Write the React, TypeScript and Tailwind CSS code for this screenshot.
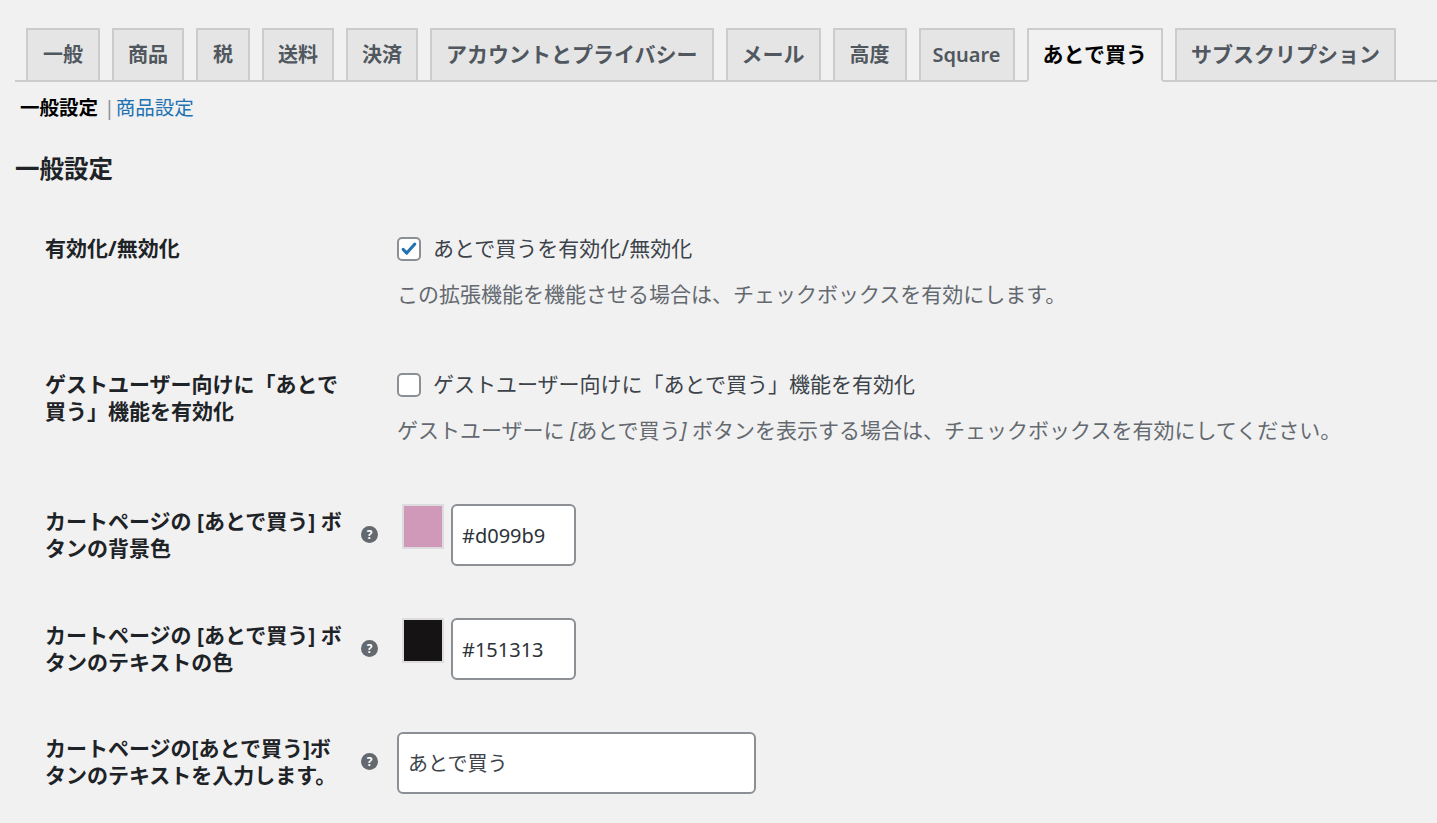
import React from "react";

const tabs = [
  { label: "一般", size: "text-[20px] px-[15px]" },
  { label: "商品", size: "text-[20px] px-[14px]" },
  { label: "税", size: "text-[20px] px-[15px]" },
  { label: "送料", size: "text-[20px] px-[14px]" },
  { label: "決済", size: "text-[20px] px-[14px]" },
  { label: "アカウントとプライバシー", size: "text-[21px] px-[14px]" },
  { label: "メール", size: "text-[21px] px-[14px]" },
  { label: "高度", size: "text-[20px] px-[15px]" },
  { label: "Square", size: "text-[20px] px-[12px]" },
  { label: "あとで買う", size: "text-[21px] px-[14px]" },
  { label: "サブスクリプション", size: "text-[21px] px-[14px]" },
];

const HelpTip = ({ top }: { top: string }) => (
  <div className="w-[36px] shrink-0">
    <span
      className={`${top} flex h-[17px] w-[17px] items-center justify-center rounded-full bg-[#646970] text-[12px] font-bold leading-none text-white`}
    >
      ?
    </span>
  </div>
);

const Checkbox = ({ checked }: { checked: boolean }) => (
  <span className="flex h-[24px] w-[24px] shrink-0 items-center justify-center rounded-[5px] border-2 border-[#8c8f94] bg-white">
    {checked && (
      <svg viewBox="0 0 20 20" className="h-[18px] w-[18px]">
        <path
          d="M3.5 10.5l4 4L16.5 4.5"
          fill="none"
          stroke="#2271b1"
          strokeWidth={3.4}
          strokeLinecap="round"
          strokeLinejoin="round"
        />
      </svg>
    )}
  </span>
);

const ColorField = ({ color }: { color: string }) => (
  <div className="flex items-start">
    <div className="ml-[5px] h-[45px] w-[42px] border-2 border-[#dcdcde]">
      <div className="h-full w-full" style={{ backgroundColor: color }} />
    </div>
    <div className="ml-[7px] flex h-[62px] w-[125px] items-center rounded-[6px] border-2 border-[#8c8f94] bg-white pl-[9px] text-[20px] text-[#2c3338]">
      {color}
    </div>
  </div>
);

export default function App() {
  return (
    <div className="min-h-screen bg-[#f1f1f1] pl-[15px] font-['Noto_Sans','Noto_Sans_CJK_JP',sans-serif] text-[#3c434a]">
      <nav className="flex gap-[12px] border-b-2 border-[#cccccc] pl-[11px] pt-[28px]">
        {tabs.map((t) => {
          const active = t.label === "あとで買う";
          return (
            <div
              key={t.label}
              className={`-mb-[2px] flex h-[54px] items-center border-2 font-semibold ${t.size} ${
                active
                  ? "border-[#cccccc] border-b-[#f1f1f1] bg-[#f1f1f1] text-black"
                  : "border-[#cccccc] bg-[#e5e5e5] text-[#50575e]"
              }`}
            >
              {t.label}
            </div>
          );
        })}
      </nav>

      <div className="mt-[13px] flex items-center pl-[5px] text-[19.5px] leading-[26px]">
        <span className="font-bold text-black">一般設定</span>
        <span className="ml-[6px] mr-[1px] text-[#8c8f94]">|</span>
        <span className="text-[#2271b1]">商品設定</span>
      </div>

      <h2 className="mt-[32px] text-[24.5px] font-bold leading-[32px] text-[#1d2327]">
        一般設定
      </h2>

      <div className="pl-[30px] text-[21px] leading-[27px]">
        <div className="mt-[50px] flex items-start">
          <div className="w-[316px] shrink-0 font-bold text-[#1d2327]">
            有効化/無効化
          </div>
          <div className="w-[36px] shrink-0" />
          <div>
            <label className="flex h-[27px] items-center gap-[12px]">
              <Checkbox checked />
              <span>あとで買うを有効化/無効化</span>
            </label>
            <p className="mt-[19px] text-[#646970]">
              この拡張機能を機能させる場合は、チェックボックスを有効にします。
            </p>
          </div>
        </div>

        <div className="mt-[63px] flex items-start">
          <div className="w-[316px] shrink-0 font-bold text-[#1d2327]">
            ゲストユーザー向けに「あとで
            <br />
            買う」機能を有効化
          </div>
          <div className="w-[36px] shrink-0" />
          <div>
            <label className="flex h-[27px] items-center gap-[12px]">
              <Checkbox checked={false} />
              <span>ゲストユーザー向けに「あとで買う」機能を有効化</span>
            </label>
            <p className="mt-[19px] text-[#646970]">
              ゲストユーザーに <i>[</i>あとで買う<i>]</i> ボタンを表示する場合は、チェックボックスを有効にしてください。
            </p>
          </div>
        </div>

        <div className="mt-[60px] flex items-start">
          <div className="w-[316px] shrink-0 pt-[4px] font-bold text-[#1d2327]">
            カートページの [あとで買う] ボ
            <br />
            タンの背景色
          </div>
          <HelpTip top="mt-[22px]" />
          <ColorField color="#d099b9" />
        </div>

        <div className="mt-[52px] flex items-start">
          <div className="w-[316px] shrink-0 pt-[4px] font-bold text-[#1d2327]">
            カートページの [あとで買う] ボ
            <br />
            タンのテキストの色
          </div>
          <HelpTip top="mt-[22px]" />
          <ColorField color="#151313" />
        </div>

        <div className="mt-[52px] flex items-start">
          <div className="w-[316px] shrink-0 pt-[3px] font-bold text-[#1d2327]">
            カートページの[あとで買う]ボ
            <br />
            タンのテキストを入力します。
          </div>
          <HelpTip top="mt-[21px]" />
          <div className="flex h-[62px] w-[359px] items-center rounded-[6px] border-2 border-[#8c8f94] bg-white pl-[9px] text-[20px] text-[#3c434a]">
            あとで買う
          </div>
        </div>
      </div>
    </div>
  );
}
